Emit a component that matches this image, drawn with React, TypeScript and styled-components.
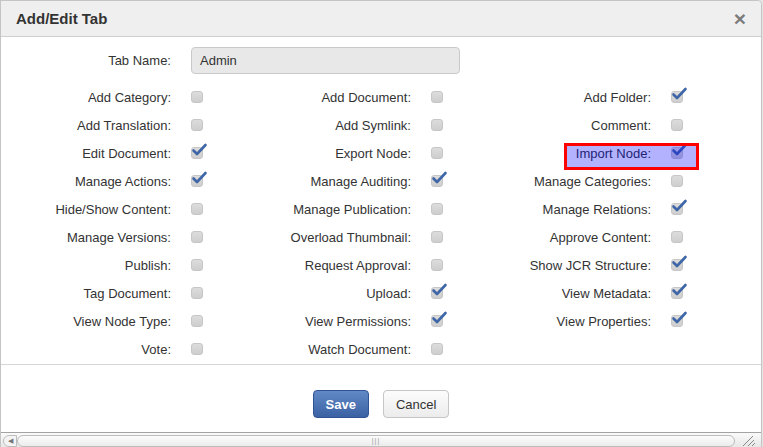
import styled, { createGlobalStyle } from "styled-components";

const GlobalStyle = createGlobalStyle`
    html, body {
        margin: 0;
        padding: 0;
        background: #e4e4e4;
        overflow: hidden;
    }
    body {
        font-family: "Liberation Sans", Arial, sans-serif;
        font-size: 13px;
        color: #333;
    }
`

interface IPerm {
    label: string;
    checked: boolean;
    highlight?: boolean;
}

const columns: IPerm[][] = [
    [
        { label: "Add Category:", checked: false },
        { label: "Add Translation:", checked: false },
        { label: "Edit Document:", checked: true },
        { label: "Manage Actions:", checked: true },
        { label: "Hide/Show Content:", checked: false },
        { label: "Manage Versions:", checked: false },
        { label: "Publish:", checked: false },
        { label: "Tag Document:", checked: false },
        { label: "View Node Type:", checked: false },
        { label: "Vote:", checked: false },
    ],
    [
        { label: "Add Document:", checked: false },
        { label: "Add Symlink:", checked: false },
        { label: "Export Node:", checked: false },
        { label: "Manage Auditing:", checked: true },
        { label: "Manage Publication:", checked: false },
        { label: "Overload Thumbnail:", checked: false },
        { label: "Request Approval:", checked: false },
        { label: "Upload:", checked: true },
        { label: "View Permissions:", checked: true },
        { label: "Watch Document:", checked: false },
    ],
    [
        { label: "Add Folder:", checked: true },
        { label: "Comment:", checked: false },
        { label: "Import Node:", checked: true, highlight: true },
        { label: "Manage Categories:", checked: false },
        { label: "Manage Relations:", checked: true },
        { label: "Approve Content:", checked: false },
        { label: "Show JCR Structure:", checked: true },
        { label: "View Metadata:", checked: true },
        { label: "View Properties:", checked: true },
    ],
]

const Dialog = styled.div`
    width: 760px;
    height: 447px;
    background: #fff;
    border: 1px solid #c4c4c4;
    border-bottom: none;
    border-top-right-radius: 5px;
    display: flex;
    flex-direction: column;
    overflow: hidden;
`

const Header = styled.div`
    height: 35px;
    flex-shrink: 0;
    background: #efefef;
    border-bottom: 1px solid #cfcfcf;
    display: flex;
    align-items: center;
    justify-content: space-between;
    padding: 0 15px 0 15px;
`

const Title = styled.h3`
    margin: 0;
    font-size: 15px;
    font-weight: bold;
    color: #333;
`

const Close = styled.span`
    font-size: 21px;
    font-weight: bold;
    line-height: 1;
    color: #7c7c7c;
    margin-top: -1px;
`

const Body = styled.div`
    padding-top: 10px;
`

const NameRow = styled.div`
    display: grid;
    grid-template-columns: 170px 269px;
    column-gap: 20px;
    align-items: center;
    margin-bottom: 9px;
`

const Label = styled.label`
    text-align: right;
    white-space: nowrap;
`

const NameInput = styled.div`
    height: 25px;
    background: #e8e8e8;
    border: 1px solid #c9c9c9;
    border-radius: 4px;
    padding: 0 8px;
    display: flex;
    align-items: center;
`

const Grid = styled.div`
    display: grid;
    grid-template-columns: repeat(3, 240px);
    grid-auto-flow: column;
    grid-template-rows: repeat(10, 28px);
`

const Cell = styled.div`
    position: relative;
    display: grid;
    grid-template-columns: 170px 12px;
    column-gap: 20px;
    align-items: center;
`

const Highlight = styled.div`
    position: absolute;
    left: 83px;
    top: 4px;
    width: 129px;
    height: 21px;
    border: 3px solid #f00;
    background: rgba(0, 0, 255, 0.3);
    pointer-events: none;
`

const Box = styled.span`
    position: relative;
    display: block;
    width: 12px;
    height: 12px;
    box-sizing: border-box;
    border-radius: 3px;
    background: linear-gradient(#dcdcdc, #cecece);
    border: 1px solid #c6c6c6;
`

const Tick = styled.svg`
    position: absolute;
    left: 0px;
    top: -5px;
    width: 15px;
    height: 14px;
    overflow: visible;
`

const Footer = styled.div`
    margin-top: auto;
    height: 68px;
    flex-shrink: 0;
    border-top: 1px solid #d6d6d6;
    display: flex;
    justify-content: center;
    gap: 14px;
    padding-top: 25px;
    box-sizing: border-box;
`

const Button = styled.button<{ $primary?: boolean }>`
    height: 28px;
    padding: 0 12px;
    border-radius: 4px;
    font-family: "Liberation Sans", Arial, sans-serif;
    font-size: 13px;
    ${(p) => p.$primary ?
    `
        font-weight: bold;
        color: #fff;
        background: linear-gradient(#6189c6, #3a61a2);
        border: 1px solid #2f5394;
    ` :
    `
        color: #333;
        background: linear-gradient(#fcfcfc, #ececec);
        border: 1px solid #c6c6c6;
    `
    }
`

const ScrollBar = styled.div`
    height: 15px;
    flex-shrink: 0;
    border-top: 1px solid #a3a3a3;
    background: linear-gradient(#fafafa, #e6e6e6);
    display: flex;
    align-items: center;
    padding: 0 2px;
`

const Arrow = styled.span`
    width: 14px;
    height: 12px;
    border-radius: 7px 0 0 7px;
    border: 1px solid #bdbdbd;
    box-sizing: border-box;
    display: flex;
    align-items: center;
    justify-content: center;
    font-size: 7px;
    color: #777;
    background: #f4f4f4;
`

const Track = styled.span`
    flex: 1;
    height: 12px;
    box-sizing: border-box;
    border: 1px solid #bdbdbd;
    border-radius: 7px;
    background: linear-gradient(#fbfbfb, #ececec);
    display: flex;
    align-items: center;
    justify-content: center;
    font-size: 7px;
    letter-spacing: 1px;
    color: #999;
`

const Grip = styled.svg`
    width: 22px;
    height: 13px;
    margin-left: 2px;
`

function Checkbox({ checked }: { checked: boolean }) {
    return (
        <Box>
            {checked && (
                <Tick viewBox="0 0 15 14">
                    <path d="M1.5 7.5 L5 11 L13.5 2" fill="none" stroke="#3f66a6" strokeWidth="2.6" strokeLinecap="round" strokeLinejoin="round" />
                </Tick>
            )}
        </Box>
    )
}

export default function App() {
    return (
        <>
            <GlobalStyle />
            <Dialog>
                <Header>
                    <Title>Add/Edit Tab</Title>
                    <Close>×</Close>
                </Header>
                <Body>
                    <NameRow>
                        <Label>Tab Name:</Label>
                        <NameInput>Admin</NameInput>
                    </NameRow>
                    <Grid>
                        {columns.map((col, ci) =>
                            col.map((p) => (
                                <Cell key={ci + p.label}>
                                    <Label>{p.label}</Label>
                                    <Checkbox checked={p.checked} />
                                    {p.highlight && <Highlight />}
                                </Cell>
                            ))
                        )}
                    </Grid>
                </Body>
                <Footer>
                    <Button $primary>Save</Button>
                    <Button>Cancel</Button>
                </Footer>
                <ScrollBar>
                    <Arrow>◀</Arrow>
                    <Track>|||</Track>
                    <Grip viewBox="0 0 22 13">
                        <path d="M6 12 L16 2 M11 12 L17 6 M15 12 L18 9" stroke="#888" strokeWidth="1" />
                    </Grip>
                </ScrollBar>
            </Dialog>
        </>
    )
}
